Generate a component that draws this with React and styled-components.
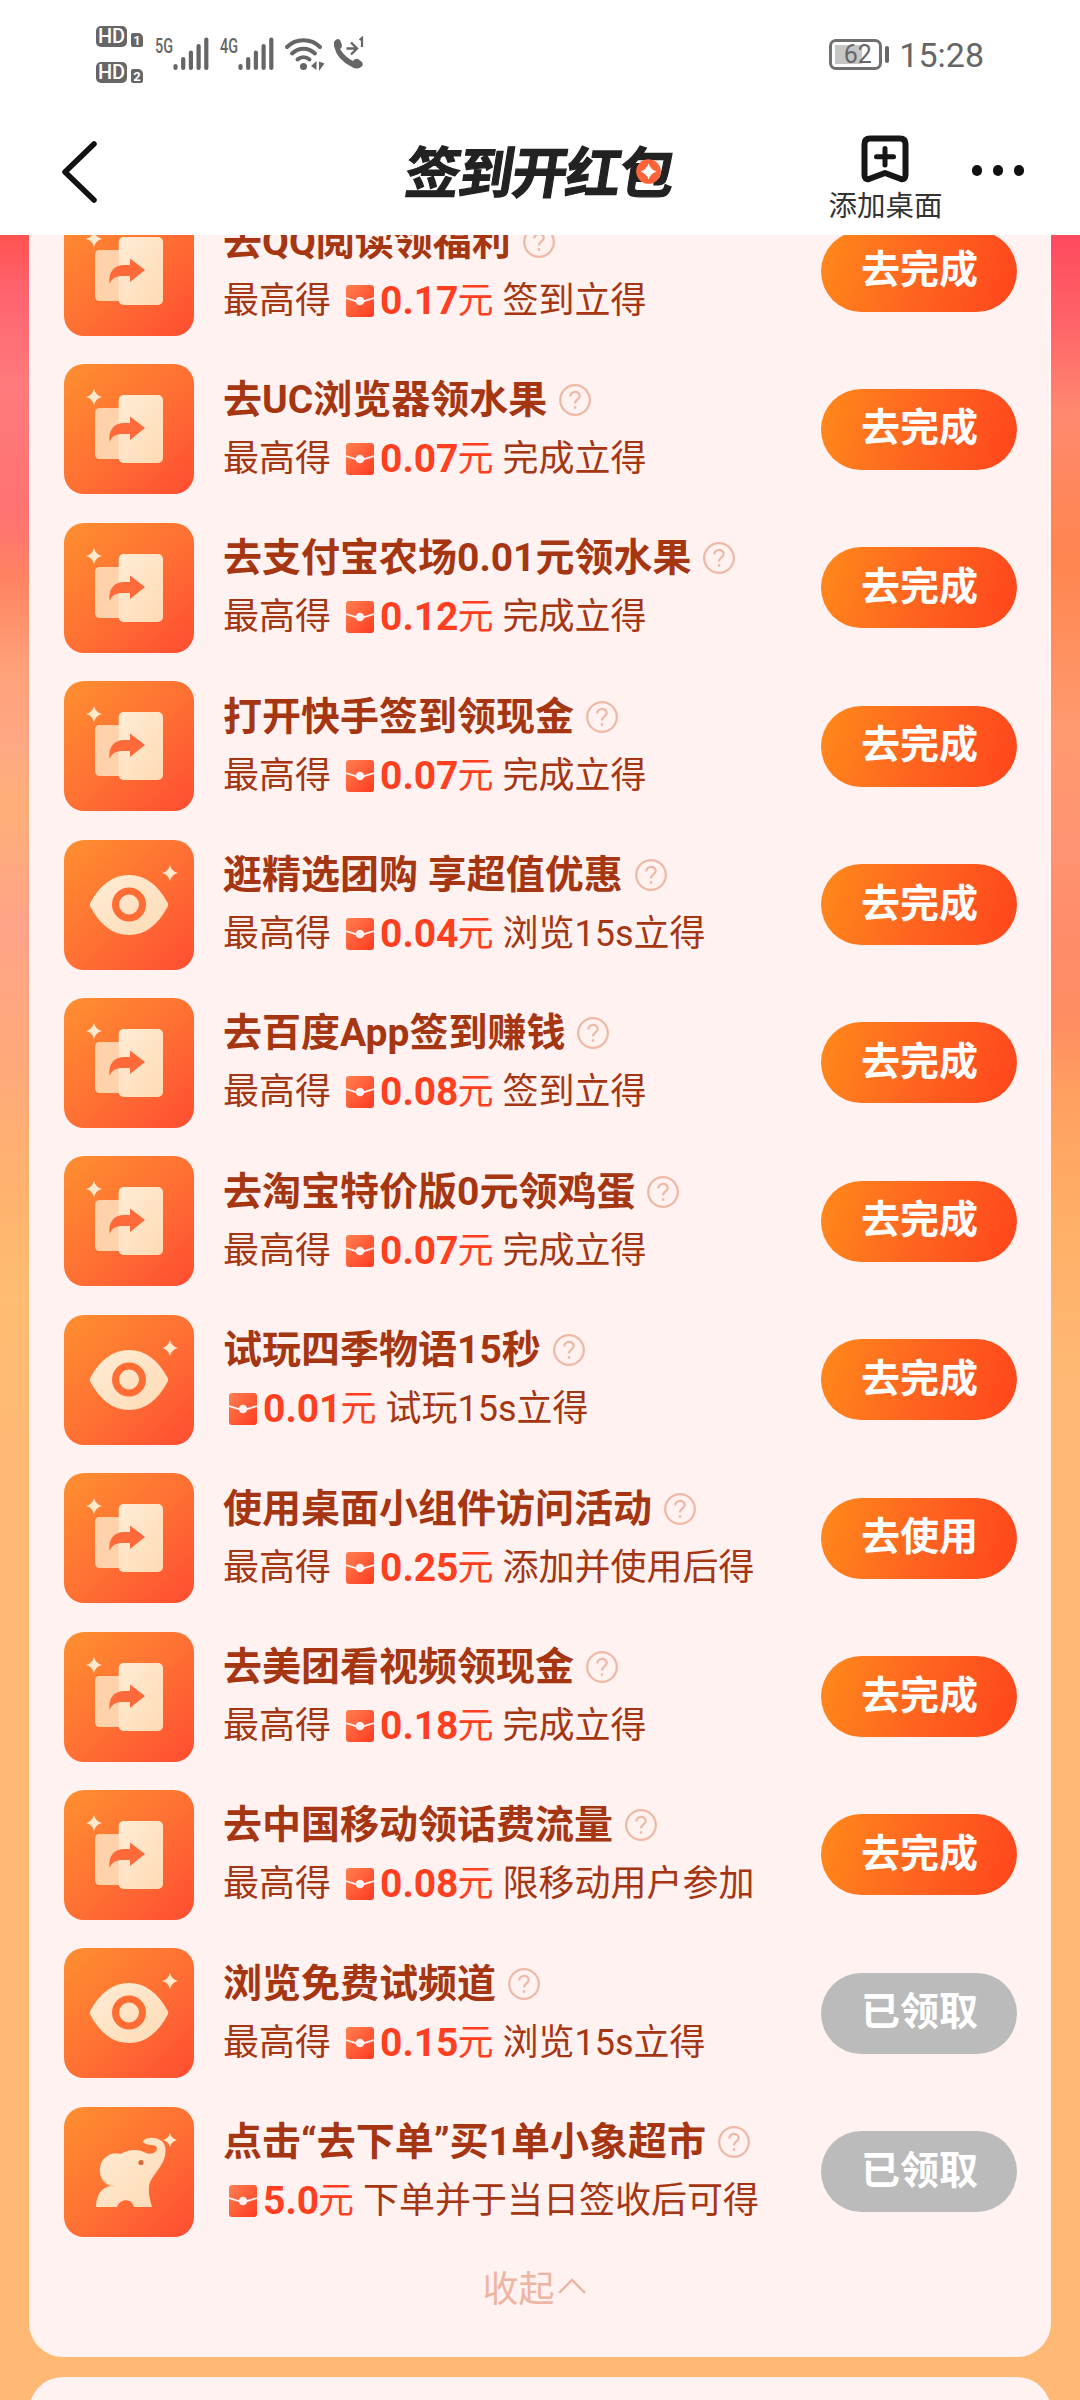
import styled, { createGlobalStyle } from "styled-components";

const tasks = [
	{ title: "去QQ阅读领福利", icon: "share", max: true, amount: "0.17", note: "签到立得" },
	{ title: "去UC浏览器领水果", icon: "share", max: true, amount: "0.07", note: "完成立得" },
	{ title: "去支付宝农场0.01元领水果", icon: "share", max: true, amount: "0.12", note: "完成立得" },
	{ title: "打开快手签到领现金", icon: "share", max: true, amount: "0.07", note: "完成立得" },
	{ title: "逛精选团购 享超值优惠", icon: "eye", max: true, amount: "0.04", note: "浏览15s立得" },
	{ title: "去百度App签到赚钱", icon: "share", max: true, amount: "0.08", note: "签到立得" },
	{ title: "去淘宝特价版0元领鸡蛋", icon: "share", max: true, amount: "0.07", note: "完成立得" },
	{ title: "试玩四季物语15秒", icon: "eye", max: false, amount: "0.01", note: "试玩15s立得" },
	{ title: "使用桌面小组件访问活动", icon: "share", max: true, amount: "0.25", note: "添加并使用后得", action: "去使用" },
	{ title: "去美团看视频领现金", icon: "share", max: true, amount: "0.18", note: "完成立得" },
	{ title: "去中国移动领话费流量", icon: "share", max: true, amount: "0.08", note: "限移动用户参加" },
	{ title: "浏览免费试频道", icon: "eye", max: true, amount: "0.15", note: "浏览15s立得", done: true },
	{ title: "点击“去下单”买1单小象超市", icon: "elephant", max: false, amount: "5.0", note: "下单并于当日签收后可得", done: true },
];

const Sparkle = ({ x, y, r = 8 }) => (
	<path
		transform={`translate(${x} ${y}) scale(${r / 8})`}
		d="M0-8Q1.6-1.6 8 0Q1.6 1.6 0 8Q-1.6 1.6-8 0Q-1.6-1.6 0-8Z"
		fill="#ffe9cc"
	/>
);

const ShareArt = () => (
	<>
		<rect x="31" y="44" width="45" height="51" rx="4.5" fill="#ffd2ab" />
		<rect x="54.7" y="31" width="44.3" height="68" rx="5" fill="url(#cream)" />
		<path
			d="M45.5 78C44 65 51 59 60 59H66V52.5L81 64L66 76V70H59C52 70 48 72 45.5 78Z"
			fill="#ff6a3a"
		/>
		<Sparkle x={30} y={33} />
	</>
);

const EyeArt = () => (
	<>
		<path
			d="M26.5 67Q25 65 26.5 62.5C36 45 49 35 65 35S94 45 103.5 62.5Q105 65 103.5 67C94 85 81 95 65 95S36 85 26.5 67Z"
			fill="url(#cream)"
		/>
		<circle cx="65" cy="64.5" r="13.5" fill="none" stroke="#ff6d35" strokeWidth="7" />
		<Sparkle x={106} y={33} />
	</>
);

const ElephantArt = () => (
	<>
		<path
			d="M32 100C32 89 37 80 47 79C38 75 35 68 36 61C37 51 47 44 57 47C64 42 75 42 82 46C88 48 93 45 93 41C92 37 87 39 82 37C79 36 78 34 80 33C84 30 91 30 96 33C102 36 102 43 101 49C99 60 86 70 85 79C84 86 86 93 88 100H70C68 91 56 91 53 100Z"
			fill="url(#cream)"
		/>
		<path d="M38 72C41 77 45 79 50 79" fill="none" stroke="#f7b98c" strokeWidth="1.2" />
		<circle cx="77" cy="55.5" r="2.6" fill="#d9693a" />
		<Sparkle x={106} y={33} r={7} />
	</>
);

const art = { share: ShareArt, eye: EyeArt, elephant: ElephantArt };

const TaskIcon = ({ type }) => {
	const Art = art[type];
	return (
		<IconTile>
			<svg width="130" height="130" viewBox="0 0 130 130">
				<defs>
					<linearGradient id="cream" x1="0" y1="0" x2="1" y2="1">
						<stop offset="0" stopColor="#ffedd6" />
						<stop offset="1" stopColor="#ffdab4" />
					</linearGradient>
				</defs>
				<Art />
			</svg>
		</IconTile>
	);
};

const Help = () => (
	<svg width="34" height="34" viewBox="0 0 34 34" fill="none" stroke="#f0b9a6" strokeWidth="2.3">
		<circle cx="17" cy="17" r="14.8" />
		<path d="M12.3 13.5C12.3 7.5 21.7 7.5 21.7 13C21.7 16.5 17 16.5 17 20.5" />
		<path d="M17 23.2V25.8" />
	</svg>
);

const Envelope = () => (
	<EnvelopeSvg width="28" height="32" viewBox="0 0 28 32">
		<defs>
			<linearGradient id="envelope" x1="0" y1="0" x2="1" y2="1">
				<stop offset="0" stopColor="#ff8050" />
				<stop offset="1" stopColor="#ff3a20" />
			</linearGradient>
		</defs>
		<rect width="28" height="32" rx="3" fill="url(#envelope)" />
		<path d="M0 13L10 16H18L28 13" fill="none" stroke="#fff2f1" strokeWidth="1.8" />
		<circle cx="14" cy="16" r="4.3" fill="#fff2f1" />
	</EnvelopeSvg>
);

const Signal = () => (
	<svg width="36" height="34" viewBox="0 0 36 34" stroke="#666" strokeWidth="4.2" strokeLinecap="round">
		<path d="M2.5 29V31M10.2 22V31M17.9 15.5V31M25.6 9V31M33.3 2.5V31" />
	</svg>
);

const Wifi = () => (
	<svg width="42" height="36" viewBox="0 0 42 36" fill="none" stroke="#666" strokeWidth="4" strokeLinecap="round">
		<path d="M3 11C12 2 27 2 36 11M8 17.5C15 11 24 11 31 17.5M13.5 23.5C17 20.5 22 20.5 25.5 23.5" />
		<circle cx="19.5" cy="30.5" r="3.5" fill="#666" stroke="none" />
		<path d="M32.500 25V34L27 30ZM35 25.500V35L40.500 27.500Z" fill="#666" stroke="none" />
	</svg>
);

const CallForward = () => (
	<svg width="36" height="36" viewBox="0 0 36 36" fill="none" stroke="#666">
		<path
			d="M2 6Q5 1 8 4L10 9Q10 12 8 13Q13 21 21 25Q23 22 26 23L30 26Q32 29 29 31Q25 34 20 31Q5 24 2 10Z"
			fill="#666"
			stroke="none"
		/>
		<path d="M14.5 12.5H24M19 6.5L25 12.5L19 18.5" strokeWidth="2.4" />
		<path d="M27.5 4L30 2V11" strokeWidth="2.2" />
	</svg>
);

const BackArrow = () => (
	<svg width="40" height="66" viewBox="0 0 40 66">
		<path d="M35 5L6 33L35 61" fill="none" stroke="#111" strokeWidth="5.5" strokeLinecap="round" strokeLinejoin="round" />
	</svg>
);

const AddShortcut = () => (
	<svg width="48" height="48" viewBox="0 0 48 48" fill="none" stroke="#161616" strokeLinejoin="round" strokeLinecap="round">
		<path
			d="M9 3.5H39Q44.5 3.5 44.5 9V40Q44.5 45 40 44L24 38L8 44Q3.5 45 3.5 40V9Q3.5 3.5 9 3.5Z"
			strokeWidth="6"
		/>
		<path d="M24 13.5V30M15.500 21.8H32.5" strokeWidth="5" />
	</svg>
);

const App = () => {
	return (
		<Screen>
			<GlobalStyle />
			<StatusBar>
				<StatusGroup>
					<HdColumn>
						<HdLine>
							<HdBadge>HD</HdBadge>
							<SimBadge>1</SimBadge>
						</HdLine>
						<HdLine>
							<HdBadge>HD</HdBadge>
							<SimBadge>2</SimBadge>
						</HdLine>
					</HdColumn>
					<Network>
						<NetworkType>5G</NetworkType>
						<Signal />
					</Network>
					<Network>
						<NetworkType>4G</NetworkType>
						<Signal />
					</Network>
					<WifiSlot>
						<Wifi />
					</WifiSlot>
					<CallForward />
				</StatusGroup>
				<StatusGroup>
					<Battery>62</Battery>
					<BatteryTip />
					<Clock>15:28</Clock>
				</StatusGroup>
			</StatusBar>

			<NavBar>
				<BackSlot>
					<BackArrow />
				</BackSlot>
				<Wordmark>
					<WordmarkText>签到开红包</WordmarkText>
					<Coin width="25" height="25" viewBox="0 0 25 25">
						<circle cx="12.5" cy="12.5" r="12.3" fill="#ff6337" />
						<path d="M12.5 4.5Q14.5 10.5 20.5 12.5Q14.5 14.5 12.5 20.5Q10.5 14.5 4.5 12.5Q10.5 10.5 12.5 4.5Z" fill="#fff" />
					</Coin>
				</Wordmark>
				<NavActions>
					<Shortcut>
						<AddShortcut />
						<ShortcutLabel>添加桌面</ShortcutLabel>
					</Shortcut>
					<MoreDots>
						<Dot />
						<Dot />
						<Dot />
					</MoreDots>
				</NavActions>
			</NavBar>

			<Content>
				<TaskCard>
					{tasks.map((task) => (
						<TaskRow key={task.title}>
							<TaskIcon type={task.icon} />
							<TaskInfo>
								<TaskTitle>
									{task.title}
									<Help />
								</TaskTitle>
								<Reward>
									{task.max && <Prefix>最高得</Prefix>}
									<Envelope />
									<Amount>{task.amount}</Amount>
									<Unit>元</Unit>
									<span>{task.note}</span>
								</Reward>
							</TaskInfo>
							<ActionButton $done={task.done}>
								{task.done ? "已领取" : task.action || "去完成"}
							</ActionButton>
						</TaskRow>
					))}
					<Collapse>
						收起
						<svg width="30" height="18" viewBox="0 0 30 18" fill="none" stroke="#eeb5a2" strokeWidth="2.4">
							<path d="M2 16L15 3L28 16" />
						</svg>
					</Collapse>
				</TaskCard>
				<NextCard />
			</Content>
		</Screen>
	);
};

export default App;

const GlobalStyle = createGlobalStyle`
	body {
		margin: 0;
		background: #fff;
		font-family: Roboto, "Noto Sans CJK SC", sans-serif;
	}

	svg {
		display: block;
		flex-shrink: 0;
	}
`;

const Screen = styled.div`
	width: 1080px;
	height: 2400px;
	overflow: hidden;
	display: flex;
	flex-direction: column;
`;

const StatusBar = styled.div`
	height: 108px;
	flex-shrink: 0;
	box-sizing: border-box;
	padding: 0 96px;
	display: flex;
	justify-content: space-between;
	align-items: center;
	color: #666;
`;

const StatusGroup = styled.div`
	display: flex;
	align-items: center;
`;

const HdColumn = styled.div`
	display: flex;
	flex-direction: column;
	gap: 15px;
	margin-right: 12px;
`;

const HdLine = styled.div`
	display: flex;
	align-items: flex-end;
	gap: 4px;
`;

const HdBadge = styled.span`
	width: 31px;
	height: 21px;
	border-radius: 5px;
	background: #666;
	color: #fff;
	font-size: 20px;
	font-weight: 500;
	line-height: 21px;
	text-align: center;
`;

const SimBadge = styled.span`
	width: 12px;
	height: 14px;
	border-radius: 2px 5px 2px 2px;
	background: #666;
	color: #fff;
	font-size: 13px;
	font-weight: 700;
	line-height: 15px;
	text-align: center;
`;

const Network = styled.div`
	display: flex;
	align-items: flex-start;
	margin-right: 10.5px;
`;

const NetworkType = styled.span`
	width: 18px;
	font-size: 20px;
	font-weight: 500;
	line-height: 18px;
	white-space: nowrap;
	transform: scaleX(0.72);
	transform-origin: left;
`;

const WifiSlot = styled.div`
	margin-right: 6px;
`;

const Battery = styled.div`
	width: 53px;
	height: 31px;
	box-sizing: border-box;
	border: 3px solid #707070;
	border-radius: 7px;
	background: linear-gradient(#c6c6c6, #c6c6c6) 3px 3px / 27px 19px no-repeat;
	font-size: 25px;
	line-height: 26px;
	text-align: center;
	text-indent: 4px;
`;

const BatteryTip = styled.div`
	width: 4px;
	height: 17px;
	margin: 0 10px 0 3px;
	border-radius: 2px;
	background: #666;
`;

const Clock = styled.span`
	font-size: 34px;
	line-height: 40px;
	padding-top: 1px;
`;

const NavBar = styled.header`
	height: 127px;
	flex-shrink: 0;
	display: grid;
	grid-template-columns: 1fr 280px 1fr;
	align-items: center;
	background: #fff;
`;

const BackSlot = styled.div`
	padding-left: 59px;
`;

const Wordmark = styled.h1`
	position: relative;
	margin: 0;
	display: flex;
	justify-content: center;
`;

const WordmarkText = styled.span`
	font-family: "Noto Sans CJK SC", sans-serif;
	font-size: 55px;
	font-weight: 700;
	line-height: 56px;
	letter-spacing: -1.5px;
	white-space: nowrap;
	color: #222;
	-webkit-text-stroke: 1.2px #222;
	transform: skewX(-9deg);
	padding-bottom: 6px;
`;

/* coin sits over the last character */
const Coin = styled.svg`
	position: absolute;
	right: 19px;
	top: 18px;
`;

const NavActions = styled.div`
	display: flex;
	justify-content: flex-end;
	padding-right: 56px;
	gap: 29px;
`;

const Shortcut = styled.div`
	display: flex;
	flex-direction: column;
	align-items: center;
	padding-top: 18px;
`;

const ShortcutLabel = styled.span`
	margin-top: 4px;
	font-size: 28.5px;
	line-height: 40px;
	color: #333;
`;

const MoreDots = styled.div`
	height: 108px;
	display: flex;
	align-items: center;
	gap: 10.5px;
`;

const Dot = styled.span`
	width: 10.5px;
	height: 10.5px;
	border-radius: 50%;
	background: #111;
`;

const Content = styled.main`
	flex: 1;
	min-height: 0;
	overflow: hidden;
	padding: 0 29px;
	display: flex;
	flex-direction: column;
	background:
		linear-gradient(
				#ff5350 0,
				#ff6470 60px,
				#ff7a7c 150px,
				#ff7272 280px,
				#ff8262 340px,
				#ffa078 430px,
				#ffa884 510px,
				#ffae78 570px,
				#ffa488 690px,
				#ffaa78 850px,
				#ffb36e 960px,
				#ffbc72 1060px,
				#ffb974 1200px
			)
			left / 50% 100% no-repeat,
		linear-gradient(
				#ff4a5e 0,
				#ff6468 90px,
				#ff8a70 180px,
				#ff8658 270px,
				#ff8650 330px,
				#ff9a70 500px,
				#ff9472 600px,
				#ff8c6a 700px,
				#ff8e62 790px,
				#ffa060 860px,
				#ffb068 1000px,
				#ffb974 1150px
			)
			right / 50% 100% no-repeat;
`;

const TaskCard = styled.section`
	margin-top: -29px;
	padding: 0 34px 0 35px;
	height: 2151px;
	flex-shrink: 0;
	box-sizing: border-box;
	display: flex;
	flex-direction: column;
	gap: 28.4px;
	border-radius: 0 0 34px 34px;
	background: #fff2f1;
`;

const NextCard = styled.section`
	margin-top: 20px;
	height: 80px;
	flex-shrink: 0;
	border-radius: 34px 34px 0 0;
	background: #fff2f1;
`;

const TaskRow = styled.div`
	height: 130px;
	flex-shrink: 0;
	display: flex;
	align-items: center;
`;

const IconTile = styled.div`
	width: 130px;
	height: 130px;
	flex-shrink: 0;
	border-radius: 20px;
	background: linear-gradient(135deg, #ff8c30 5%, #ff7133 50%, #ff5032 95%);
`;

const TaskInfo = styled.div`
	flex: 1;
	min-width: 0;
	padding-left: 29px;
	display: flex;
	flex-direction: column;
	gap: 5px;
`;

const TaskTitle = styled.div`
	display: flex;
	align-items: center;
	gap: 11px;
	font-size: 39px;
	font-weight: 700;
	line-height: 54px;
	color: #a63612;
	white-space: pre;
`;

const Reward = styled.div`
	display: flex;
	align-items: center;
	font-size: 36px;
	line-height: 54px;
	color: #a63612;
	white-space: nowrap;
`;

const Prefix = styled.span`
	margin-right: 9px;
`;

const EnvelopeSvg = styled.svg`
	margin: 0 6px;
`;

const Amount = styled.span`
	font-size: 39px;
	font-weight: 700;
	color: #ff3f1f;
`;

const Unit = styled.span`
	margin-right: 9px;
	margin-left: -1px;
	color: #ff3f1f;
`;

const ActionButton = styled.button`
	width: 196px;
	height: 81px;
	flex-shrink: 0;
	padding: 0 0 2px 1px;
	border: none;
	border-radius: 41px;
	background: ${({ $done }) =>
		$done ? "#bbb" : "linear-gradient(105deg, #ff861a 5%, #ff6420 50%, #ff461c 98%)"};
	color: #fff;
	font-family: inherit;
	font-size: 39px;
	font-weight: 700;
	line-height: 54px;
`;

const Collapse = styled.div`
	height: 42px;
	padding-right: 12px;
	display: flex;
	justify-content: center;
	align-items: center;
	gap: 2px;
	font-size: 36px;
	color: #eeb5a2;
`;
